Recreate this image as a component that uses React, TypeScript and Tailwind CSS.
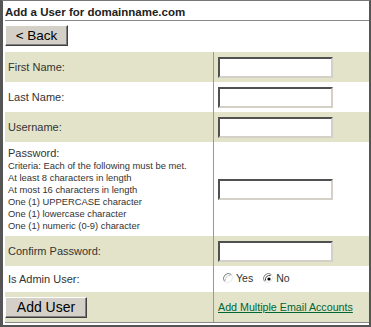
import React from 'react'

function Radio({ checked }: { checked?: boolean }) {
  return (
    <svg width="12" height="12" viewBox="0 0 12 12" className="shrink-0">
      <circle cx="6" cy="6" r="5" fill="#fff" />
      <path d="M1.5 8.5 A5 5 0 0 1 8.5 1.5" fill="none" stroke="#808080" strokeWidth="1" />
      <path d="M8.5 1.5 A5 5 0 0 1 1.5 8.5" fill="none" stroke="#e8e8e8" strokeWidth="1" />
      <path d="M2.6 7.6 A4 4 0 0 1 7.6 2.6" fill="none" stroke={checked ? '#404040' : '#c8c8c8'} strokeWidth="1" />
      {checked && <circle cx="6" cy="6" r="1.6" fill="#000" />}
    </svg>
  )
}

function Field() {
  return (
    <input
      type="text"
      className="h-[21px] w-[115px] border-2 border-t-[#505050] border-l-[#505050] border-b-[#d4d0c8] border-r-[#d4d0c8] bg-white outline-none"
    />
  )
}

function Row({ shaded, label, height = 'h-[30px]', children }: { shaded?: boolean; label: React.ReactNode; height?: string; children: React.ReactNode }) {
  return (
    <div className={`grid grid-cols-[208px_1fr] ${height} ${shaded ? 'bg-[#e3e3c9]' : 'bg-white'}`}>
      <div className="flex items-center pl-[3px]">{label}</div>
      <div className="flex items-center border-l border-[#999] pl-[4px]">{children}</div>
    </div>
  )
}

export default function App() {
  return (
    <div className="h-[327px] w-[371px] overflow-hidden bg-white font-['Liberation_Sans',Arial,sans-serif] text-[11px] text-[#333]">
      <div className="flex h-[327px] flex-col border-t border-b-2 border-l-[3px] border-r-2 border-t-[#777] border-b-[#555] border-l-[#555] border-r-[#555] pl-[2px]">
        <div className="flex h-[20px] items-end border-b border-[#888] pb-[2px] text-[11.5px] font-bold leading-none text-[#222]">
          Add a User for domainname.com
        </div>
        <div className="flex h-[31px] items-start pt-[4px]">
          <button className="flex h-[21px] w-[63px] items-center justify-center border border-t-white border-l-white border-b-[#404040] border-r-[#404040] bg-[#d4d0c8] text-[13.5px] leading-none text-black shadow-[inset_-1px_-1px_#808080]">
            &lt; Back
          </button>
        </div>

        <div className="flex flex-col border-b border-[#888]">
          <Row shaded label="First Name:"><Field /></Row>
          <Row label="Last Name:"><Field /></Row>
          <Row shaded label="Username:"><Field /></Row>
          <Row
            height="h-[94px]"
            label={
              <div className="flex flex-col">
                <span className="leading-[13px]">Password:</span>
                <div className="text-[9.4px] leading-[12px]">
                  <div>Criteria: Each of the following must be met.</div>
                  <div>At least 8 characters in length</div>
                  <div>At most 16 characters in length</div>
                  <div>One (1) UPPERCASE character</div>
                  <div>One (1) lowercase character</div>
                  <div>One (1) numeric (0-9) character</div>
                </div>
              </div>
            }
          >
            <Field />
          </Row>
          <Row shaded label="Confirm Password:"><Field /></Row>
          <Row height="h-[26px]" label="Is Admin User:">
            <div className="flex items-center pl-[5px] text-[10.5px]">
              <Radio />
              <span className="ml-[1px] mr-[10px]">Yes</span>
              <Radio checked />
              <span className="ml-[1px]">No</span>
            </div>
          </Row>
          <div className="grid h-[30px] grid-cols-[208px_1fr] bg-[#e3e3c9]">
            <div className="flex items-center">
              <button className="flex h-[21px] w-[82px] items-center justify-center border border-t-white border-l-white border-b-[#404040] border-r-[#404040] bg-[#d4d0c8] text-[14px] leading-none text-black shadow-[inset_-1px_-1px_#808080]">
                Add User
              </button>
            </div>
            <div className="flex items-center border-l border-[#999] pl-[4px]">
              <a href="#" className="text-[10.7px] text-[#006633] underline">Add Multiple Email Accounts</a>
            </div>
          </div>
        </div>
      </div>
    </div>
  )
}
